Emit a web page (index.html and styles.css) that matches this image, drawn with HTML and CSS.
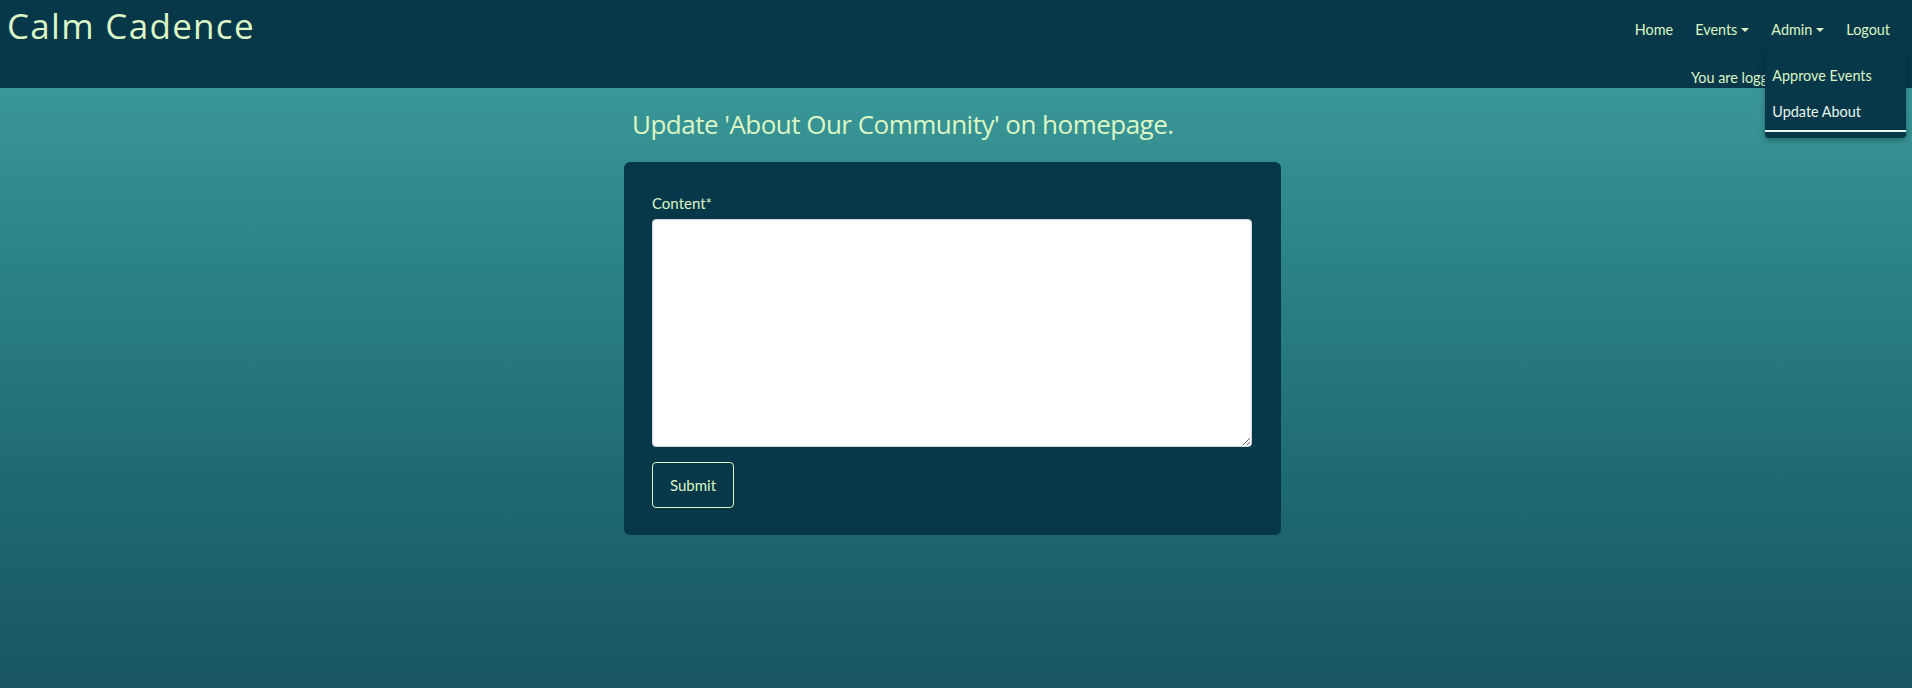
FILE: index.html
```html
<!DOCTYPE html>
<html lang="en">
<head>
<meta charset="utf-8">
<title>Calm Cadence</title>
<link rel="stylesheet" href="styles.css">
</head>
<body>
<header class="site-header">
  <div class="brand">Calm Cadence</div>
  <div class="header-right">
    <nav class="nav">
      <a class="nav-link" href="#">Home</a>
      <a class="nav-link dropdown-toggle" href="#">Events</a>
      <div class="nav-item">
        <a class="nav-link dropdown-toggle" href="#">Admin</a>
        <div class="dropdown-menu">
          <a class="dropdown-item active" href="#">Approve Events</a>
          <a class="dropdown-item current" href="#">Update About</a>
        </div>
      </div>
      <a class="nav-link" href="#">Logout</a>
    </nav>
    <p class="status">You are logged in as admin</p>
  </div>
</header>
<main class="main">
  <section class="column">
    <h2 class="page-title">Update 'About Our Community' on homepage.</h2>
    <form class="card">
      <label class="form-label" for="content">Content*</label>
      <textarea id="content" class="form-control"></textarea>
      <button type="button" class="btn">Submit</button>
    </form>
  </section>
</main>
</body>
</html>
```
FILE: styles.css
```css
html, body {
  margin: 0;
  padding: 0;
  height: 100%;
}
body {
  font-family: Lato, "Open Sans", sans-serif;
  font-size: 15px;
  line-height: 1.5;
  color: #dcf7c5;
  background: linear-gradient(to bottom, #40a19f 0px, #2c8387 260px, #1f6a72 480px, #185462 688px);
  display: flex;
  flex-direction: column;
  min-height: 688px;
}
a { color: inherit; text-decoration: none; }

.site-header {
  height: 88px;
  background: #06384a;
  display: flex;
  justify-content: space-between;
  align-items: flex-start;
  flex-shrink: 0;
}
.brand {
  font-family: "Open Sans", sans-serif;
  font-size: 35px;
  line-height: 42px;
  letter-spacing: 1.3px;
  padding: 5px 0 0 7px;
  color: #dcf7c5;
}
.header-right {
  display: flex;
  flex-direction: column;
  align-items: flex-end;
  padding-top: 11px;
  font-size: 14.4px;
}
.nav {
  display: flex;
  align-items: center;
  padding-right: 11px;
}
.nav-item { position: relative; }
.nav-link {
  display: block;
  padding: 8px 11px;
  line-height: 22px;
  color: #dcf7c5;
}
.dropdown-toggle::after {
  content: "";
  display: inline-block;
  margin-left: 4px;
  vertical-align: 3px;
  border-top: 4px solid currentColor;
  border-left: 4px solid transparent;
  border-right: 4px solid transparent;
}
.status {
  margin: 18px 0 0;
  padding-right: 54px;
  line-height: 22px;
}
.dropdown-menu {
  position: absolute;
  top: 41px;
  left: 5px;
  width: 141px;
  padding: 6px 0;
  background: #06384a;
  border-radius: 4px;
  box-shadow: 0 2px 6px rgba(0,0,0,0.3);
  z-index: 10;
}
.dropdown-item {
  display: block;
  padding: 0 7px;
  line-height: 36px;
  white-space: nowrap;
  font-size: 14.4px;
}
.dropdown-item.active { color: #dcf7c5; }
.dropdown-item.current {
  color: #eaf5ee;
  border-bottom: 2px solid #eaf5ee;
}

.main {
  flex: 1;
  display: flex;
  justify-content: center;
  padding-right: 7px;
}
.column {
  width: 657px;
}
.page-title {
  font-family: "Open Sans", sans-serif;
  font-weight: 400;
  font-size: 26px;
  line-height: 32px;
  letter-spacing: -0.52px;
  margin: 20px 0 0 8px;
  color: #dcf7c5;
}
.card {
  margin-top: 22px;
  background: #06384a;
  border-radius: 6px;
  padding: 30px 29px 27px 28px;
  display: flex;
  flex-direction: column;
  align-items: flex-start;
}
.form-label {
  display: block;
  line-height: 22px;
  margin-bottom: 5px;
  color: #dcf7c5;
}
.form-control {
  box-sizing: border-box;
  width: 600px;
  height: 228px;
  border: 1px solid #ced4da;
  border-radius: 4px;
  background: #fff;
  margin: 0;
  font-family: Lato, sans-serif;
}
.btn {
  margin-top: 15px;
  font-family: Lato, sans-serif;
  font-size: 15px;
  line-height: 22px;
  padding: 11px 17px;
  background: transparent;
  color: #dcf7c5;
  border: 1px solid #dcf7c5;
  border-radius: 4px;
}
```
